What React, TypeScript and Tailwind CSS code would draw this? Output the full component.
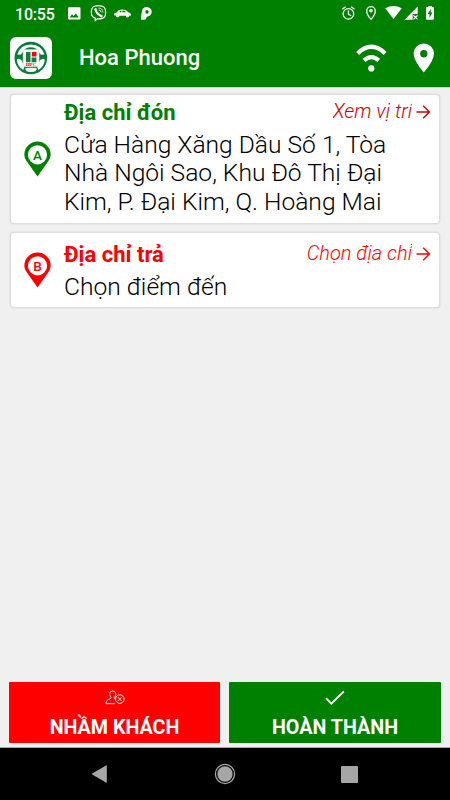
import React from "react";

function StatusBar() {
  return (
    <div className="flex h-7 items-center pl-[15px] pr-4 text-white">
      <span className="w-[52px] whitespace-nowrap pt-px text-[16px] font-medium leading-7 tracking-[-0.2px]">10:55</span>
      <svg width="90" height="20" viewBox="67 4 90 20" fill="currentColor">
        <path fillRule="evenodd" d="M69 7.3H79.3Q80.5 7.3 80.5 8.5V18.5Q80.5 19.6 79.3 19.6H69Q68 19.6 68 18.5V8.5Q68 7.3 69 7.3ZM69.7 17.5H78.8L75.8 13.4L73.7 16L72 14.3Z" />
        <path fill="none" stroke="currentColor" strokeWidth="1.2" d="M94.5 6.2Q98.5 5 102.5 6.2Q105.6 7.2 105.6 12.5Q105.6 17.8 102.3 18.3Q99.5 19 97.5 18.7L95.2 20.6V18.1Q91.3 17 91.3 12.3Q91.3 7.2 94.5 6.2Z" />
        <path fill="none" stroke="currentColor" strokeWidth="2" d="M95.3 8.7Q95.7 13.7 101.7 16.2" />
        <path d="M94.2 8.9L96 8L97.4 10.4L96 11.5ZM100.4 14.4L103 15.8L101.9 17.4L99.4 16.2Z" />
        <path fill="none" stroke="currentColor" strokeWidth=".8" d="M98.4 8.1Q102.8 8 102.8 12.5M98.7 10Q101 10 101 12.4" />
        <path fillRule="evenodd" d="M114.2 13.6L116.5 12.6L118.8 10Q123 8.8 126 10.3L128.3 12.2Q131.4 13 131 15.4L129.2 15.7A1.7 1.7 0 0 1 125.8 15.8H119.4A1.7 1.7 0 0 1 116 15.4L114.2 15.2ZM119.2 12.3H121.4V10.4H120.6ZM122.3 12.3H126L124.8 10.9Q123.6 10.3 122.3 10.4Z" />
        <path fillRule="evenodd" d="M146.9 6.9A5 4.9 0 0 1 146.6 16.7V17.8Q146.4 19.8 144 19.8H141.2V15.6L142 11.3Q142.2 7 146.9 6.9ZM147 9.9A1.7 1.9 0 1 0 147 13.7A1.7 1.9 0 1 0 147 9.9Z" />
      </svg>
      <svg className="ml-auto" width="94" height="20" viewBox="340 4 94 20" fill="currentColor">
        <g fill="none" stroke="currentColor" strokeWidth="1.3">
          <circle cx="348.4" cy="13.9" r="5.3" />
          <path d="M348.4 10.6V14.2L351.2 15.8M342.3 9.3L345.5 6.7M351.3 6.7L354.5 9.3" />
          <path d="M371 19.3Q366.7 14.7 366.7 10.9A4.3 4.3 0 0 1 375.3 10.9Q375.3 14.7 371 19.3Z" />
        </g>
        <circle cx="371" cy="10.8" r="1.8" />
        <path d="M385.2 8.2Q393.4 3.8 401.8 8.2L393.5 19Z" />
        <path d="M417.7 6.6V14H412.6V19.7H404.6ZM413.6 15L415.5 16.3L417.3 15L418 15.8L416.4 17.4L418 19L417.2 19.8L415.5 18.3L413.8 19.8L413 19L414.6 17.4L413 15.8Z" />
        <path fillRule="evenodd" d="M428.2 7V6H431.8V7H433Q434 7 434 8V18.7Q434 19.7 433 19.7H427Q426 19.7 426 18.7V8Q426 7 427 7ZM430.8 8.8L427.7 14.1H429.5V18L432.5 12.6H430.8Z" />
      </svg>
    </div>
  );
}

function AppLogo() {
  return (
    <svg width="42" height="42" viewBox="0 0 42 42" className="shrink-0">
      <rect width="42" height="42" rx="6" fill="white" />
      <circle cx="20.8" cy="21" r="16.3" fill="#087d3a" />
      <path d="M7.2 17.4Q10.3 7.4 20.8 7.4T34.4 17.4L31 17.8L28.8 15.2Q26.6 10.2 20.8 10.2T12.8 15.2L10.6 17.8Z" fill="white" />
      <path d="M6.8 22.5Q9 20.8 11.8 23.5L14.4 30L13.2 33Q7.3 29.3 6.8 22.5ZM34.8 22.5Q32.6 20.8 29.8 23.5L27.2 30L28.4 33Q34.3 29.3 34.8 22.5Z" fill="white" />
      <rect x="13.1" y="12.6" width="16" height="17.2" rx="2.5" fill="white" stroke="#b6d8c3" strokeWidth=".5" />
      <path d="M15.9 14.9H20.5V25.2H15.9ZM21.6 20.4H26.4V25.2H21.6Z" fill="#157d43" />
      <path d="M21.8 14.9H26.4V19.5H21.8Z" fill="#f00" />
      <text x="21" y="29.2" textAnchor="middle" fontFamily="Liberation Serif, serif" fontSize="5" fontWeight="bold" fill="#f00">HPC</text>
      <path d="M15.3 31.2Q21 30.4 26.7 31.2Q26.8 35 21 35.1Q15.2 35 15.3 31.2Z" fill="white" />
    </svg>
  );
}

function Header() {
  return (
    <header className="flex h-[59px] items-center pl-[10px] pr-4">
      <AppLogo />
      <h1 className="ml-[27px] whitespace-nowrap text-[22px] font-medium leading-[30px] text-white">Hoa Phuong</h1>
      <svg className="ml-auto" width="78" height="32" viewBox="356 40 78 32">
        <g fill="none" stroke="white" strokeWidth="4.2">
          <path d="M357.6 51.4Q371.3 38.2 385.1 51.4M364 58.4Q371.3 51.8 378.8 58.4" />
        </g>
        <circle cx="371.3" cy="66.4" r="3.1" fill="white" />
        <path fill="white" fillRule="evenodd" d="M423.8 70.6Q413.6 58.5 413.6 51.8A10.2 10.2 0 0 1 434 51.8Q434 58.5 423.8 70.6ZM423.8 48.1A3.7 3.7 0 1 0 423.8 55.5A3.7 3.7 0 1 0 423.8 48.1Z" />
      </svg>
    </header>
  );
}

function Pin({ letter }: { letter: string }) {
  return (
    <svg width="28" height="36" viewBox="0 0 28 36">
      <path fill="currentColor" d="M13.5 35.4L2.7 20.3Q.3 17.3 .3 13.8A13.2 13.2 0 0 1 26.7 13.8Q26.7 17.3 24.3 20.3Z" />
      <circle cx="13.5" cy="13.8" r="9.6" fill="white" />
      <text x="13.5" y="18.5" textAnchor="middle" fontFamily="Roboto, sans-serif" fontSize="13.5" fontWeight="500" fill="currentColor">{letter}</text>
    </svg>
  );
}

interface AddressProps {
  letter: string;
  title: string;
  action: string;
  lines: string[];
  tone: string;
  actionTone: string;
  size: string;
  inset: string;
}

function AddressCard({ letter, title, action, lines, tone, actionTone, size, inset }: AddressProps) {
  return (
    <section className={`flex rounded border border-[#dedede] bg-white shadow-[0_0_2px_#ccc] ${size}`}>
      <div className={`flex w-[53px] shrink-0 items-center justify-center ${tone}`}>
        <Pin letter={letter} />
      </div>
      <div className={`min-w-0 flex-1 pr-2 ${inset}`}>
        <div className="flex h-8 items-start justify-between">
          <h2 className={`whitespace-nowrap text-[22px] font-bold leading-[28px] ${tone}`}>{title}</h2>
          <div className={`flex items-center whitespace-nowrap text-[20px] font-[350] italic leading-[25px] ${actionTone}`}>
            <span className="overflow-hidden">{action}</span>
            <svg className="ml-1 mt-px" width="15" height="14" viewBox="0 0 15 14" fill="none" stroke="currentColor" strokeWidth="1.4">
              <path d="M.5 7H13.3M7.2 .8L13.4 7L7.2 13.2" />
            </svg>
          </div>
        </div>
        {lines.map((line) => (
          <p key={line} className="whitespace-nowrap text-[24.6px] font-[350] leading-[28.3px] text-black">{line}</p>
        ))}
      </div>
    </section>
  );
}

function Actions() {
  return (
    <div className="mt-auto flex gap-[9px] pb-1 pl-[9px] pr-[9px]">
      <button className="flex h-[61px] w-[211px] flex-col items-center rounded-[1px] bg-[#f00] pt-2 text-white">
        <svg width="20" height="16" viewBox="0 0 20 16" fill="none" stroke="currentColor" strokeWidth=".9">
          <path d="M10 13.7H1Q.7 10.4 3.5 9.5Q6 8.8 6 7.5Q4.6 6 4.6 3.7Q4.6 1 7.6 1T10.8 3.8Q10.8 6.2 9.2 7.6Q9 8.8 11 9.4" />
          <circle cx="14.8" cy="9.1" r="4.3" />
          <path d="M12.8 7.1L16.8 11.1M16.8 7.1L12.8 11.1" />
        </svg>
        <span className="mt-[10px] whitespace-nowrap text-[19.7px] font-bold leading-6">NHẦM KHÁCH</span>
      </button>
      <button className="flex h-[61px] w-[212px] flex-col items-center rounded-[1px] bg-[#008000] pt-2 text-white">
        <svg width="20" height="16" viewBox="0 0 20 16" fill="none" stroke="currentColor" strokeWidth="1.9">
          <path d="M1 8.2L6.3 13.6L18.8 1.5" />
        </svg>
        <span className="mt-[10px] whitespace-nowrap text-[19.7px] font-bold leading-6">HOÀN THÀNH</span>
      </button>
    </div>
  );
}

function NavigationBar() {
  return (
    <nav className="flex h-[53px] items-center border-t border-[#a8a8a8] bg-black pl-[91px]">
      <svg width="16" height="20" viewBox="0 0 16 20"><path d="M15.8 1V19L.4 10Z" fill="#a6a6a6" /></svg>
      <svg className="ml-[107px]" width="22" height="22" viewBox="0 0 22 22"><circle cx="11" cy="11" r="9.6" fill="none" stroke="#a6a6a6" strokeWidth="1.2" /><circle cx="11" cy="11" r="7.7" fill="#a6a6a6" /></svg>
      <span className="ml-[105px] h-[17px] w-[17px] rounded-[1px] bg-[#a6a6a6]" />
    </nav>
  );
}

export default function App() {
  return (
    <main className="flex h-[800px] w-[450px] flex-col overflow-hidden bg-[#f0f0f0] font-[Roboto,'Noto_Sans',sans-serif]">
      <div className="h-[88px] border-b border-[#c6d7c6] bg-[#008000]">
        <StatusBar />
        <Header />
      </div>
      <div className="flex flex-col gap-2 px-[10px] pt-[6px]">
        <AddressCard letter="A" title="Địa chỉ đón" action="Xem vị trí" lines={["Cửa Hàng Xăng Dầu Số 1, Tòa", "Nhà Ngôi Sao, Khu Đô Thị Đại", "Kim, P. Đại Kim, Q. Hoàng Mai"]} tone="text-[#008000]" actionTone="text-[#d00000]" size="h-[130px]" inset="pt-1" />
        <AddressCard letter="B" title="Địa chỉ trả" action="Chọn địa chỉ" lines={["Chọn điểm đến"]} tone="text-[#f00]" actionTone="text-[#f00]" size="h-[76px]" inset="pt-2" />
      </div>
      <Actions />
      <NavigationBar />
    </main>
  );
}
